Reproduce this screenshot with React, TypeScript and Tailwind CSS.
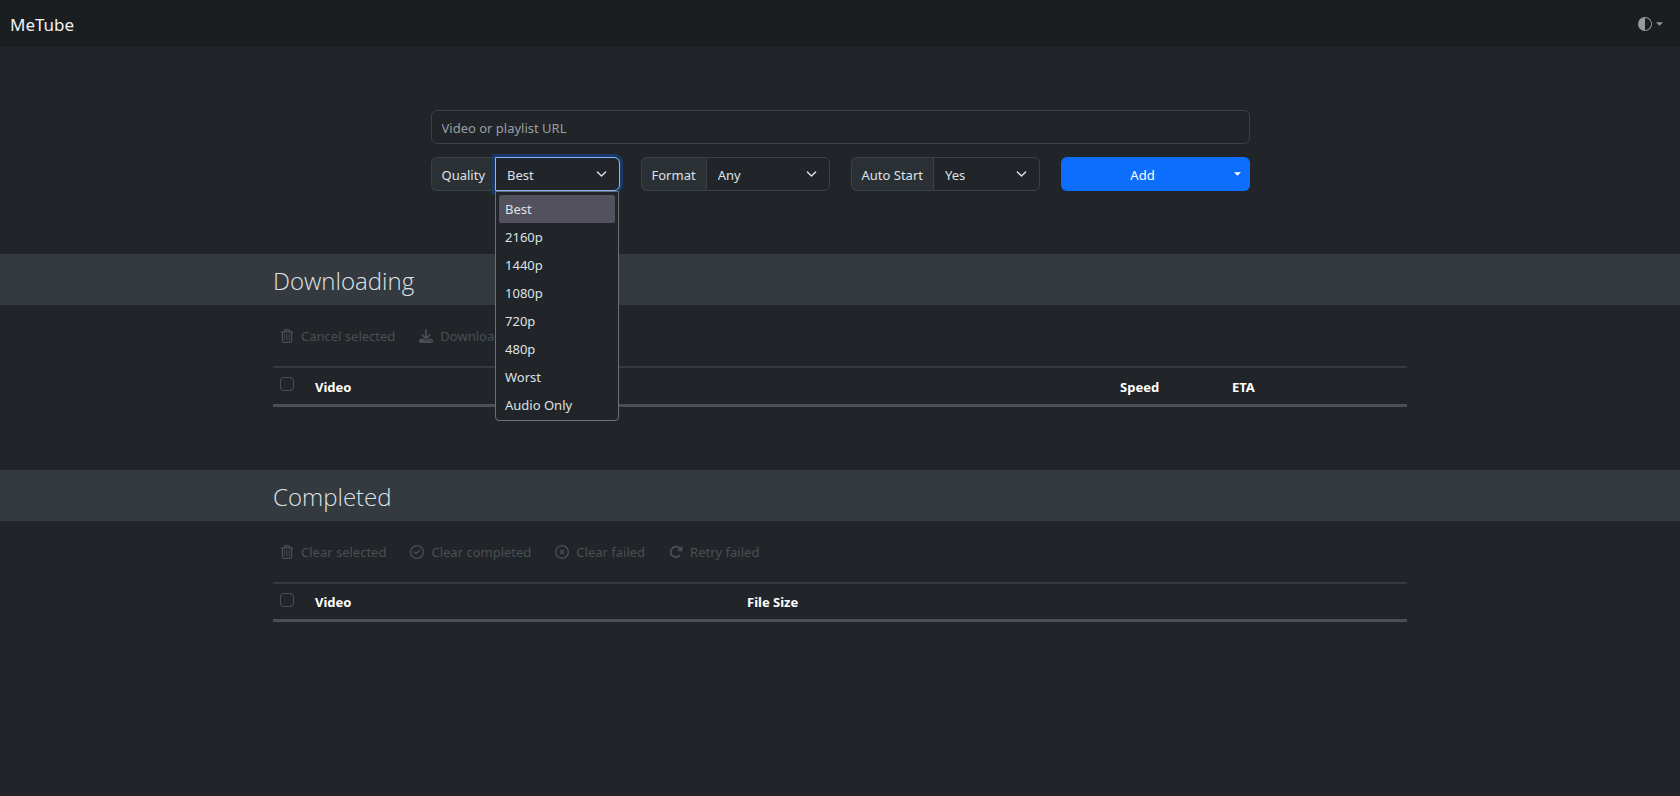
import { ReactNode, useState } from "react";
import { FaDownload, FaRotateRight, FaRegCircleCheck, FaRegCircleXmark, FaRegTrashCan } from "react-icons/fa6";
import { BsCircleHalf } from "react-icons/bs";

const qualities = ["Best", "2160p", "1440p", "1080p", "720p", "480p", "Worst", "Audio Only"];

const Caret = () => (
  <svg viewBox="0 0 8 4" className="h-1 w-[7px] fill-current" aria-hidden="true">
    <path d="M0 0h8L4 4z" />
  </svg>
);

const Chevron = () => (
  <svg viewBox="0 0 16 16" className="pointer-events-none absolute right-[13px] top-1/2 h-[11px] w-[11px] -translate-y-1/2 fill-none stroke-[#dee2e6] stroke-2" strokeLinecap="round" strokeLinejoin="round" aria-hidden="true">
    <path d="m2 5 6 6 6-6" />
  </svg>
);

interface SelectGroupProps {
  id: string;
  label: string;
  options: string[];
  active?: boolean;
  children?: ReactNode;
}

const SelectGroup = ({ id, label, options, active, children }: SelectGroupProps) => {
  const [value, setValue] = useState(options[0]);

  return (
    <div className="flex h-[34px] min-w-0 flex-1">
      <label htmlFor={id} className="flex shrink-0 items-center rounded-l-md border border-r-0 border-[#3c4146] bg-[#2b3035] px-[10px] pt-[2px]">
        {label}
      </label>
      <div className="relative min-w-0 flex-1">
        <select
          id={id}
          value={value}
          onChange={(e) => setValue(e.target.value)}
          className={`h-full w-full appearance-none rounded-r-md border bg-[#212529] pt-[2px] pr-8 pl-[11px] outline-none ${active ? "border-[#86b7fe] ring-3 ring-[#1b3a69]" : "border-[#3c4146]"}`}
        >
          {options.map((option) => (
            <option key={option}>{option}</option>
          ))}
        </select>
        <Chevron />
        {children}
      </div>
    </div>
  );
};

interface ActionProps {
  icon: ReactNode;
  label: string;
}

const Action = ({ icon, label }: ActionProps) => (
  <button type="button" disabled className="flex items-center gap-[7px] whitespace-nowrap text-[#4a4f53]">
    {icon}
    {label}
  </button>
);

const SectionTitle = ({ title }: { title: string }) => (
  <div className="bg-[#343a40]">
    <h2 className="mx-auto w-[67.5%] pt-[9px] pb-[6px] font-['Open_Sans','Noto_Sans',sans-serif] text-2xl leading-9 font-light text-[#dee2e6]">{title}</h2>
  </div>
);

interface Column {
  title: string;
  width: string;
}

const DownloadTable = ({ name, columns }: { name: string; columns: Column[] }) => (
  <table className="w-full table-fixed border-t-2 border-b-3 border-t-[#343a40] border-b-[#495057] text-left">
    <thead>
      <tr className="h-[38px]">
        <th className="w-[42px] pb-[3px] pl-[7px]">
          <input type="checkbox" aria-label={`Select all ${name}`} className="block h-[14px] w-[14px] appearance-none rounded-sm border border-[#495057]" />
        </th>
        {columns.map((column) => (
          <th key={column.title} className={`pt-[2px] font-bold text-white ${column.width}`}>{column.title}</th>
        ))}
      </tr>
    </thead>
  </table>
);

const App = () => {
  const [url, setUrl] = useState("");
  const [quality, setQuality] = useState("Best");

  return (
    <div className="min-h-screen bg-[#212529] font-['Noto_Sans',sans-serif] text-[13px] leading-5 text-[#dee2e6]">
      <nav className="flex h-[47px] items-center justify-between bg-[#1a1e21] pr-[17px] pl-[10px]">
        <a href="#" className="pt-[2px] text-[17px] text-[#f0f1f2]">MeTube</a>
        <button type="button" aria-label="Toggle theme" className="flex items-center gap-1 text-[#97999b]">
          <BsCircleHalf size={14} />
          <Caret />
        </button>
      </nav>

      <form className="mx-auto flex w-[48.75%] flex-col gap-[13px] pt-[63px] pb-[63px]" onSubmit={(e) => e.preventDefault()}>
        <input
          type="text"
          value={url}
          onChange={(e) => setUrl(e.target.value)}
          aria-label="Video or playlist URL"
          placeholder="Video or playlist URL"
          className="h-[34px] rounded-md border border-[#3c4146] bg-[#212529] px-[10px] pt-[2px] placeholder:text-[#9a9da0]"
        />
        <div className="flex gap-[21px]">
          <SelectGroup id="quality" label="Quality" options={qualities} active>
            <ul role="listbox" aria-label="Quality" className="absolute top-full right-px left-0 z-10 rounded-b-sm border border-[#6c6f73] bg-[#212529] px-[3px] pt-[3px] pb-px">
              {qualities.map((item) => (
                <li
                  key={item}
                  role="option"
                  aria-selected={item === quality}
                  onClick={() => setQuality(item)}
                  className={`flex h-7 items-center rounded-xs px-[6px] ${item === quality ? "bg-[#53515d]" : ""}`}
                >
                  {item}
                </li>
              ))}
            </ul>
          </SelectGroup>
          <SelectGroup id="format" label="Format" options={["Any", "MP4", "MP3"]} />
          <SelectGroup id="auto-start" label="Auto Start" options={["Yes", "No"]} />
          <div className="flex h-[34px] min-w-0 flex-1 rounded-md bg-[#0d6efd] text-white">
            <button type="submit" className="flex-1 pt-[2px]">Add</button>
            <button type="button" aria-label="More options" className="px-[9px]">
              <Caret />
            </button>
          </div>
        </div>
      </form>

      <SectionTitle title="Downloading" />
      <section className="mx-auto w-[67.5%] pb-[63px]">
        <div className="flex h-[61px] items-center gap-6 pt-px pl-[7px]">
          <Action icon={<FaRegTrashCan size={14} />} label="Cancel selected" />
          <Action icon={<FaDownload size={14} />} label="Download selected" />
        </div>
        <DownloadTable
          name="downloading"
          columns={[
            { title: "Video", width: "" },
            { title: "Speed", width: "w-[112px]" },
            { title: "ETA", width: "w-[175px]" },
          ]}
        />
      </section>

      <SectionTitle title="Completed" />
      <section className="mx-auto w-[67.5%] pb-[63px]">
        <div className="flex h-[61px] items-center gap-6 pt-px pl-[7px]">
          <Action icon={<FaRegTrashCan size={14} />} label="Clear selected" />
          <Action icon={<FaRegCircleCheck size={14} />} label="Clear completed" />
          <Action icon={<FaRegCircleXmark size={14} />} label="Clear failed" />
          <Action icon={<FaRotateRight size={14} />} label="Retry failed" />
        </div>
        <DownloadTable
          name="completed"
          columns={[
            { title: "Video", width: "" },
            { title: "File Size", width: "w-[58.2%]" },
          ]}
        />
      </section>
    </div>
  );
};

export default App;
